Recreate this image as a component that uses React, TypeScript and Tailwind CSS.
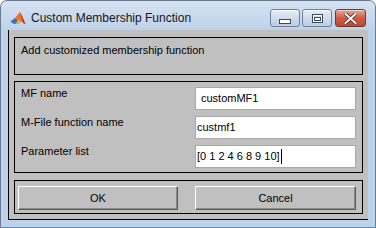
import React from "react";

function MatlabIcon() {
  return (
    <svg width="16" height="15" viewBox="0 0 16 15">
      <path d="M0.5 10.5 L5 7 L8 9 L6 13 Z" fill="#3f6fb4" />
      <path d="M5 7 L10 1 L12 5 L15.5 13 L11 10.5 L8 9 Z" fill="#e8742a" />
      <path d="M10 1 L12 5 L15.5 13 L13 12 Z" fill="#b8321a" />
      <path d="M8 9 L11 10.5 L9 13 L6 13 Z" fill="#f3a23c" />
      <path d="M0.5 10.5 L6 13 L3 12.5 Z" fill="#2a4f8a" />
    </svg>
  );
}

function CaptionButton({ kind }: { kind: "min" | "max" | "close" }) {
  if (kind === "close") {
    return (
      <div className="w-[31px] h-[18px] rounded-[3px] border border-[#6e3a34] bg-gradient-to-b from-[#e8a597] via-[#cf5c47] to-[#c0492f] flex items-center justify-center shadow-[inset_0_1px_0_rgba(255,255,255,0.5)]">
        <svg width="13" height="11" viewBox="0 0 13 11">
          <path
            d="M1.5 1 L11.5 10 M11.5 1 L1.5 10"
            stroke="#4a2a26"
            strokeWidth="3.6"
            strokeLinecap="square"
          />
          <path
            d="M1.5 1 L11.5 10 M11.5 1 L1.5 10"
            stroke="#ffffff"
            strokeWidth="2"
            strokeLinecap="square"
          />
        </svg>
      </div>
    );
  }
  return (
    <div className="w-[30px] h-[18px] rounded-[3px] border border-[#6f819b] bg-gradient-to-b from-[#e6eef8] via-[#cfdcec] to-[#bccde3] flex items-center justify-center shadow-[inset_0_1px_0_rgba(255,255,255,0.7)]">
      {kind === "min" ? (
        <svg width="12" height="5" viewBox="0 0 12 5" className="mt-[6px]">
          <rect x="0.5" y="0.5" width="11" height="4" fill="#ffffff" stroke="#3d4a5c" />
        </svg>
      ) : (
        <svg width="11" height="9" viewBox="0 0 11 9">
          <rect x="0.5" y="0.5" width="10" height="8" fill="none" stroke="#3d4a5c" />
          <rect x="1.5" y="1.5" width="8" height="6" fill="none" stroke="#ffffff" />
          <rect x="2.5" y="3.5" width="6" height="3" fill="#ffffff" stroke="#3d4a5c" />
        </svg>
      )}
    </div>
  );
}

function Field({ value, padLeft, caret }: { value: string; padLeft: string; caret?: boolean }) {
  return (
    <div
      className={`w-[161px] h-[23px] bg-white border border-[#a9a9a9] flex items-center ${padLeft} text-[11px] leading-[13px] text-black`}
    >
      <span>{value}</span>
      {caret && <span className="inline-block w-[1px] h-[15px] bg-black ml-[1px]" />}
    </div>
  );
}

function Btn({ label, w }: { label: string; w: string }) {
  return (
    <div
      className={`${w} h-[24px] bg-[#c0c0c0] border border-t-white border-l-white border-b-[#5a5a5a] border-r-[#5a5a5a] shadow-[inset_-1px_-1px_0_#8a8a8a] flex items-center justify-center text-[11px] text-black`}
    >
      {label}
    </div>
  );
}

export default function App() {
  return (
    <div className="w-[376px] h-[228px] bg-white font-['Liberation_Sans',Arial,sans-serif]">
      <div className="w-full h-full flex flex-col rounded-t-[7px] border border-[#6a7b90] border-b-[#2f9ec4] bg-[#bcd2ea]">
        <div className="h-[29px] flex items-start rounded-t-[6px] bg-gradient-to-b from-[#d6e3f2] to-[#bdd2ea]">
          <div className="ml-[9px] mt-[10px]">
            <MatlabIcon />
          </div>
          <div className="ml-[5px] mt-[10px] text-[12px] leading-[15px] text-[#1c1420]">
            Custom Membership Function
          </div>
          <div className="ml-auto mr-[9px] mt-[8px] flex gap-[2px]">
            <CaptionButton kind="min" />
            <CaptionButton kind="max" />
            <div className="ml-[1px]">
              <CaptionButton kind="close" />
            </div>
          </div>
        </div>
        <div className="flex-1 flex px-[7px] pb-[7px]">
          <div className="flex-1 flex flex-col bg-[#c0c0c0] border-l border-b border-black pl-[5px] pr-[5px] pt-[7px] pb-[5px] gap-[6px]">
            <div className="h-[38px] border border-black pl-[6px] pt-[6px] text-[11px] leading-[13px] text-black">
              Add customized membership function
            </div>
            <div className="h-[92px] border border-black px-[6px] pt-[5px] flex flex-col gap-[6px] text-[11px] leading-[13px] text-black">
              <div className="flex justify-between items-start">
                <span className="mt-[0px]">MF name</span>
                <Field value="customMF1" padLeft="pl-[5px]" />
              </div>
              <div className="flex justify-between items-start">
                <span>M-File function name</span>
                <Field value="custmf1" padLeft="pl-[1px]" />
              </div>
              <div className="flex justify-between items-start">
                <span>Parameter list</span>
                <Field value="[0 1 2 4 6 8 9 10]" padLeft="pl-[1px]" caret />
              </div>
            </div>
            <div className="mt-[1px] h-[34px] border border-black pl-[3px] pr-[6px] pt-[5px] flex justify-between items-start">
              <Btn label="OK" w="w-[160px]" />
              <Btn label="Cancel" w="w-[161px]" />
            </div>
          </div>
        </div>
      </div>
    </div>
  );
}
